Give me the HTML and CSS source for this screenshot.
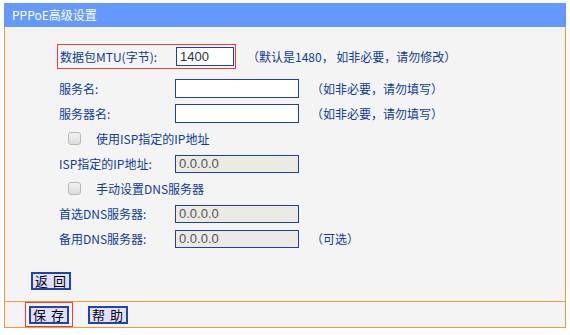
FILE: index.html
```html
<!DOCTYPE html>
<html>
<head>
<meta charset="utf-8">
<link rel="stylesheet" href="styles.css">
</head>
<body>
<div class="panel">
  <div class="title">PPPoE高级设置</div>
  <div class="main">
    <div class="row mtu">
      <div class="hl">
        <span class="label">数据包MTU(字节):</span>
        <span class="input short">1400</span>
      </div>
      <span class="note mtunote">（默认是1480， 如非必要，请勿修改）</span>
    </div>
    <div class="row">
      <span class="label">服务名:</span>
      <span class="input"></span>
      <span class="note">（如非必要，请勿填写）</span>
    </div>
    <div class="row">
      <span class="label">服务器名:</span>
      <span class="input"></span>
      <span class="note">（如非必要，请勿填写）</span>
    </div>
    <div class="row">
      <span class="check"></span>
      <span class="checklabel">使用ISP指定的IP地址</span>
    </div>
    <div class="row">
      <span class="label">ISP指定的IP地址:</span>
      <span class="input dis">0.0.0.0</span>
    </div>
    <div class="row">
      <span class="check"></span>
      <span class="checklabel">手动设置DNS服务器</span>
    </div>
    <div class="row">
      <span class="label">首选DNS服务器:</span>
      <span class="input dis">0.0.0.0</span>
    </div>
    <div class="row">
      <span class="label">备用DNS服务器:</span>
      <span class="input dis">0.0.0.0</span>
      <span class="note">（可选）</span>
    </div>
    <div class="backrow">
      <span class="btn">返 回</span>
    </div>
  </div>
  <div class="footer">
    <div class="hlbtn"><span class="btn">保 存</span></div>
    <span class="btn">帮 助</span>
  </div>
</div>
</body>
</html>
```

FILE: styles.css
```css
* { box-sizing: border-box; }
body {
  margin: 0;
  background: #ffffff;
  font-family: "Noto Sans CJK SC", "Noto Sans", sans-serif;
  font-size: 12px;
  color: #0c3c9c;
}
.panel {
  margin: 3px 0 0 4px;
  width: 562px;
}
.title {
  height: 24px;
  background: #6699ff;
  color: #ffffff;
  padding-left: 8px;
  line-height: 24px;
  font-size: 12px;
}
.main {
  background: #f4f4f4;
  border-left: 1px solid #f5963c;
  border-right: 1px solid #f5963c;
  border-bottom: 1px solid #f5963c;
  margin-right: 0;
  width: 562px;
  padding: 17px 0 11px 0;
}
.row {
  display: flex;
  align-items: center;
  height: 25px;
  padding-left: 54px;
}
.row.mtu {
  padding-left: 52px;
  margin-bottom: 7px;
}
.hl {
  display: flex;
  align-items: center;
  height: 25px;
  width: 179px;
  padding-left: 2px;
  border: 1px solid #f03c3c;
}
.label {
  width: 116px;
  flex: none;
  line-height: 16px;
}
.input {
  display: inline-block;
  width: 124px;
  height: 19px;
  border: 1px solid #1c3fa8;
  background: #ffffff;
  color: #333333;
  font-family: "Liberation Sans", Arial, sans-serif;
  font-size: 13px;
  line-height: 17px;
  padding-left: 3px;
  flex: none;
}
.input.short {
  width: 58px;
}
.input.dis {
  background: #ebeae4;
  color: #555555;
  height: 18px;
  line-height: 16px;
}
.note {
  margin-left: 12px;
  line-height: 16px;
}
.mtunote {
  margin-left: 11px;
}
.check {
  display: inline-block;
  width: 13px;
  height: 13px;
  margin-left: 9px;
  border: 1px solid #b8b8b8;
  border-radius: 3px;
  background: linear-gradient(#f2f2f2, #dcdcdc);
  flex: none;
}
.checklabel {
  margin-left: 15px;
}
.backrow {
  display: flex;
  padding: 21px 0 0 26px;
}
.btn {
  display: inline-flex;
  align-items: center;
  justify-content: center;
  width: 40px;
  height: 18px;
  border: 2px solid #1f44b0;
  background: #e0e0ff;
  color: #000000;
  font-size: 13px;
  line-height: 14px;
  letter-spacing: 1px;
}
.footer {
  display: flex;
  align-items: center;
  height: 26px;
  background: #f4f4f4;
  border-left: 1px solid #f5963c;
  border-right: 1px solid #f5963c;
  border-bottom: 1px solid #f5963c;
  padding-left: 20px;
}
.hlbtn {
  display: flex;
  align-items: center;
  justify-content: center;
  width: 48px;
  height: 25px;
  border: 1px solid #f03c3c;
  margin-right: 15px;
}
```
